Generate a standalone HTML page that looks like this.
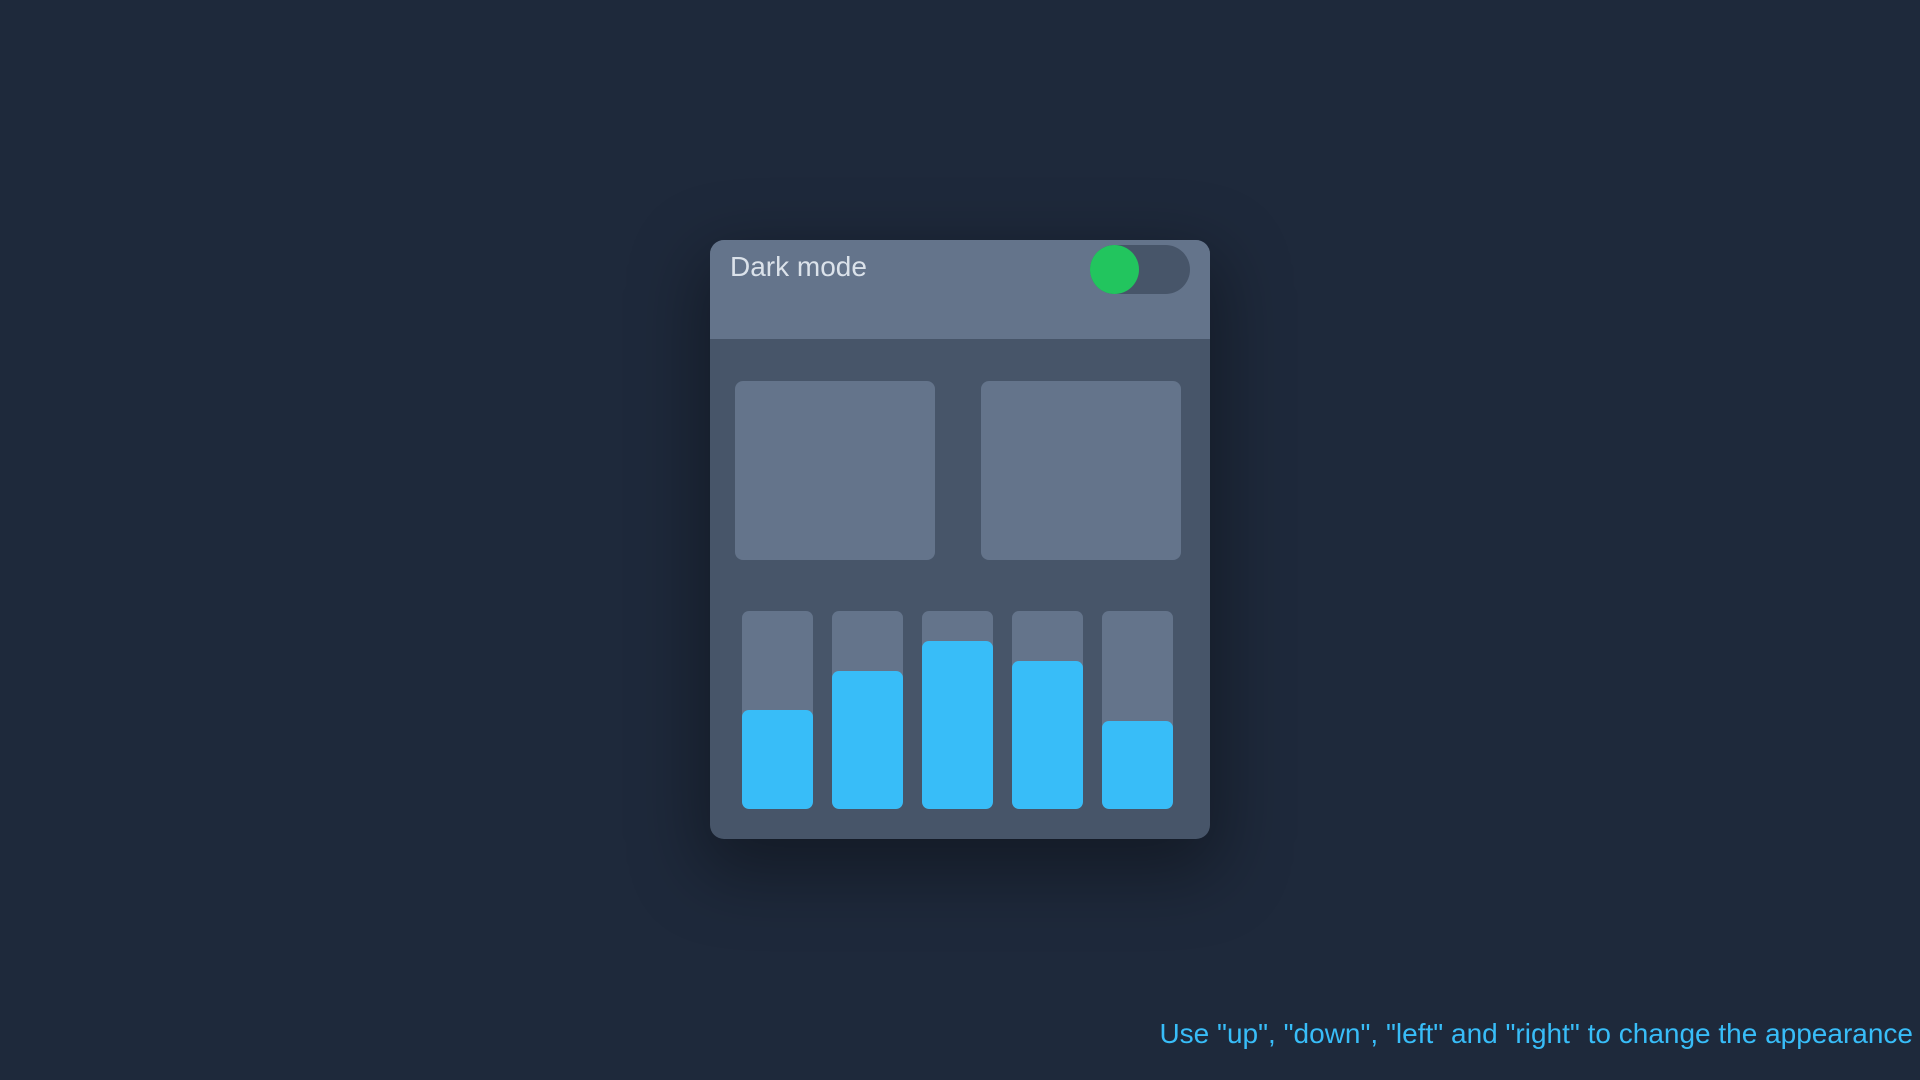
<!DOCTYPE html>
<html><head><meta charset="utf-8"><style>
body{margin:0;width:1920px;height:1080px;background:#1e293b;font-family:"Liberation Sans",Arial,sans-serif;position:relative;overflow:hidden}
.card{position:absolute;left:710px;top:240px;width:500px;height:599px;background:#475569;border-radius:14px;overflow:hidden;box-shadow:0 25px 70px 10px rgba(0,0,0,0.35)}
.head{position:absolute;left:0;top:0;width:500px;height:99px;background:#64748b}
.title{position:absolute;left:20px;top:11px;font-size:28px;color:#dbe2ea}
.track{position:absolute;left:380px;top:5px;width:100px;height:49px;border-radius:25px;background:#475569}
.knob{position:absolute;left:0;top:0;width:49px;height:49px;border-radius:50%;background:#22c55e}
.box{position:absolute;top:141px;width:200px;height:179px;background:#64748b;border-radius:8px}
.bar{position:absolute;top:371px;width:71px;height:198px;background:#64748b;border-radius:7px;overflow:hidden}
.fill{position:absolute;left:0;bottom:0;width:100%;background:#38bdf8;border-radius:7px}
.hint{position:absolute;right:7px;top:1018px;font-size:28px;color:#38bdf8;white-space:nowrap}
</style></head><body>
<div class="card">
<div class="head"><div class="title">Dark mode</div><div class="track"><div class="knob"></div></div></div>
<div class="box" style="left:25px"></div>
<div class="box" style="left:271px"></div>
<div class="bar" style="left:32px"><div class="fill" style="height:99px"></div></div>
<div class="bar" style="left:122px"><div class="fill" style="height:138px"></div></div>
<div class="bar" style="left:212px"><div class="fill" style="height:168px"></div></div>
<div class="bar" style="left:302px"><div class="fill" style="height:148px"></div></div>
<div class="bar" style="left:392px"><div class="fill" style="height:88px"></div></div>
</div>
<div class="hint">Use "up", "down", "left" and "right" to change the appearance</div>
</body></html>
